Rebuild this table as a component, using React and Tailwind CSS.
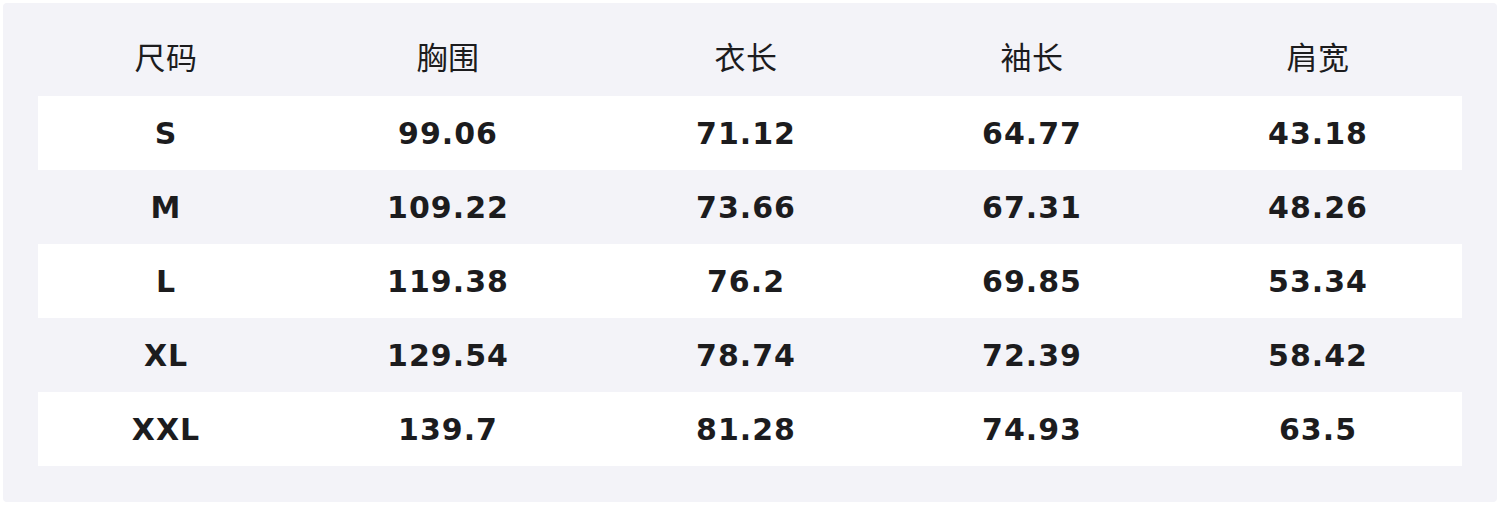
import React from "react";

const headers = ["尺码", "胸围", "衣长", "袖长", "肩宽"];
const rows = [
  ["S", "99.06", "71.12", "64.77", "43.18"],
  ["M", "109.22", "73.66", "67.31", "48.26"],
  ["L", "119.38", "76.2", "69.85", "53.34"],
  ["XL", "129.54", "78.74", "72.39", "58.42"],
  ["XXL", "139.7", "81.28", "74.93", "63.5"],
];

export default function App() {
  return (
    <div className="w-[1500px] h-[505px] bg-white p-[3px]">
      <div className="h-[499px] bg-[#f3f3f8] rounded-[4px] px-[35px] pt-[19px]">
        <div className="grid grid-cols-[256px_308px_288px_284px_288px] h-[74px] items-center pb-[6px] text-[31px] text-[#1c1c1e] tracking-[0.5px]" style={{ fontFamily: '"Noto Sans CJK SC", sans-serif' }}>
          {headers.map((h) => (
            <div key={h} className="text-center">{h}</div>
          ))}
        </div>
        {rows.map((r, i) => (
          <div
            key={r[0]}
            className={`grid grid-cols-[256px_308px_288px_284px_288px] h-[74px] items-center text-[30px] font-bold tracking-[1px] text-[#1c1c1e] ${i % 2 === 0 ? "bg-white" : "bg-transparent"}`}
            style={{ fontFamily: '"DejaVu Sans", sans-serif' }}
          >
            {r.map((c, j) => (
              <div key={j} className="text-center">{c}</div>
            ))}
          </div>
        ))}
      </div>
    </div>
  );
}
